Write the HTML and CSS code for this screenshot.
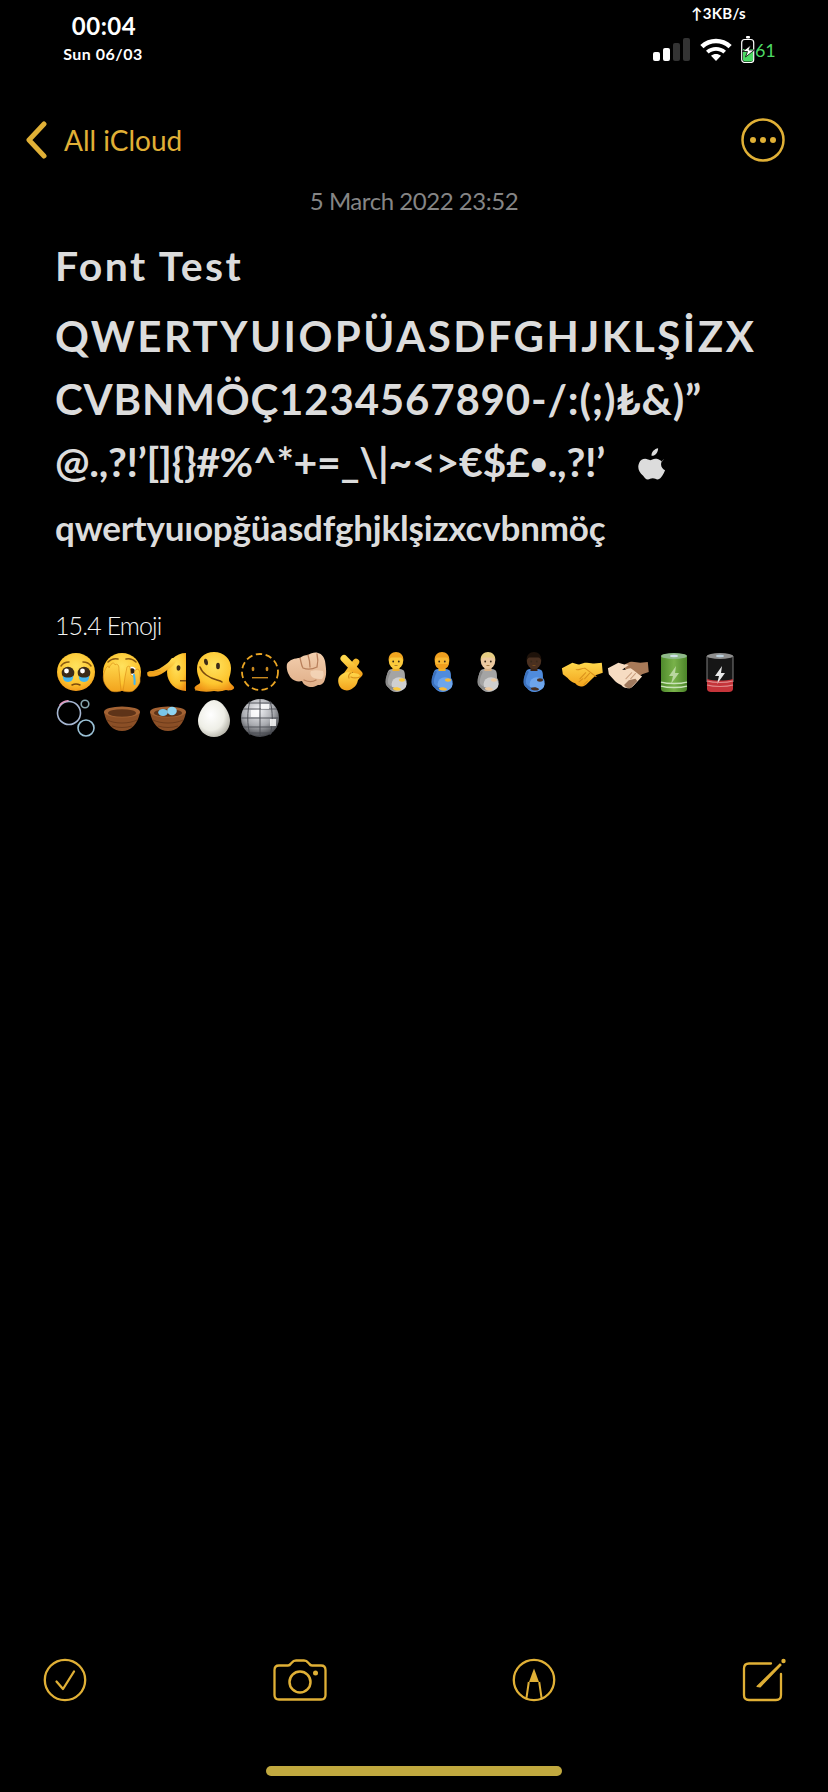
FILE: index.html
```html
<!DOCTYPE html>
<html lang="en">
<head>
<meta charset="utf-8">
<title>Font Test</title>
<link rel="stylesheet" href="styles.css">
</head>
<body>
<div class="screen">
  <header class="status">
    <div class="clock">
      <div class="time">00:04</div>
      <div class="day">Sun 06/03</div>
    </div>
    <div class="sys">
      <div class="speed">↑3KB/s</div>
      <div class="sys-row">
        <div class="signal"><i class="b1"></i><i class="b2"></i><i class="b3"></i><i class="b4"></i></div>
        <svg class="wifi" viewBox="0 0 32 24"><path fill="#fff" d="M16 24l-5-5.2c2.9-2.4 7.100-2.400 10 0zM8.700 16.500L6 13.700c5.700-5 14.300-5 20 0l-2.700 2.800c-4.200-3.600-10.400-3.600-14.600 0zM3.500 11.200L.3 8C9-.4 23-.4 31.700 8l-3.200 3.200C21.600 4.700 10.400 4.700 3.500 11.200z"/></svg>
        <svg class="batt" viewBox="0 0 14 27"><rect x="5" y="0" width="4" height="2.500" rx="1" fill="#fff"/><rect x=".7" y="3.500" width="12" height="23" rx="3" fill="none" stroke="#fff" stroke-width="1.200"/><path fill="#4cd964" d="M2 13h10v10.500a2 2 0 0 1-2 2H4a2 2 0 0 1-2-2z"/><path fill="#fff" stroke="#000" stroke-width=".8" d="M10 9L1.500 15.500h5L4.500 21l9-7h-5.500z"/></svg>
        <span class="pct">61</span>
      </div>
    </div>
  </header>

  <nav class="nav">
    <div class="back">
      <svg class="chev" viewBox="0 0 22 38"><path d="M19 3L4 19l15 16" fill="none" stroke="#e0b036" stroke-width="5" stroke-linecap="round" stroke-linejoin="round"/></svg>
      <span class="back-label">All iCloud</span>
    </div>
    <svg class="more" viewBox="0 0 44 44"><circle cx="22" cy="22" r="20.500" fill="none" stroke="#e0b036" stroke-width="2.500"/><circle cx="12" cy="22" r="3" fill="#e0b036"/><circle cx="22" cy="22" r="3" fill="#e0b036"/><circle cx="32" cy="22" r="3" fill="#e0b036"/></svg>
  </nav>

  <div class="stamp">5 March 2022 23:52</div>

  <main class="note">
    <h1 class="title">Font Test</h1>
    <div class="big l1">QWERTYUIOPÜASDFGHJKLŞİZX</div>
    <div class="big l2">CVBNMÖÇ1234567890-/:(;)₺&amp;)”</div>
    <div class="big l3">@.,?!’[]{}#%^*+=_\|~&lt;&gt;€$£<span class="dot">•</span>.,?!’<svg class="apple" viewBox="0 0 30 34"><path fill="#dcdcdc" d="M21.500 0c.2 2.200-.6 4.200-1.800 5.700-1.300 1.500-3.200 2.700-5.200 2.500-.2-2 .7-4.100 1.900-5.400C17.700 1.300 19.800.2 21.500 0zM28 11.600c-2 1.300-3.300 3.300-3.300 5.800 0 2.900 1.700 5.200 4.300 6.300-.7 2.100-1.700 4.100-3 5.900-1.300 1.800-2.700 3.900-4.900 3.900-2.100 0-2.800-1.300-5.300-1.300-2.400 0-3.200 1.300-5.200 1.300-2.200.1-3.800-2.200-5.100-4C.9 26-1 20.700 1.200 15.800c1.200-2.600 3.700-4.300 6.500-4.300 2.100 0 4 1.400 5.300 1.400 1.300 0 3.500-1.700 5.900-1.500 1.100 0 4.500.4 6.600 3.200z"/></svg></div>
    <div class="small">qwertyuıopğüasdfghjklşizxcvbnmöç</div>
    <div class="emoji-label">15.4 Emoji</div>

    <div class="emoji-grid">
      <svg class="emo" viewBox="0 0 46 46">
        <defs>
          <radialGradient id="face" cx=".5" cy=".35" r=".7"><stop offset="0" stop-color="#ffe25e"/><stop offset=".65" stop-color="#fdc52f"/><stop offset="1" stop-color="#ee8f14"/></radialGradient>
          <linearGradient id="hand" x1="0" y1="0" x2="0" y2="1"><stop offset="0" stop-color="#ffd84d"/><stop offset="1" stop-color="#f2a31c"/></linearGradient>
          <linearGradient id="skin" x1="0" y1="0" x2="0" y2="1"><stop offset="0" stop-color="#f3cfae"/><stop offset="1" stop-color="#dfae88"/></linearGradient>
          <linearGradient id="green" x1="0" y1="0" x2="1" y2="0"><stop offset="0" stop-color="#4f8a2c"/><stop offset=".5" stop-color="#79b24a"/><stop offset="1" stop-color="#4b8429"/></linearGradient>
          <radialGradient id="egg" cx=".4" cy=".4" r=".7"><stop offset="0" stop-color="#fff"/><stop offset=".6" stop-color="#eeeee6"/><stop offset="1" stop-color="#a9a79c"/></radialGradient>
          <radialGradient id="ball" cx=".45" cy=".3" r=".75"><stop offset="0" stop-color="#f4f5f8"/><stop offset=".55" stop-color="#a8aaaf"/><stop offset="1" stop-color="#2f3136"/></radialGradient>
          <symbol id="preg" viewBox="0 0 46 46">
            <path fill="var(--shirt)" d="M14 21c4-2 10-2 14 0 2 1 2 5 2 8 2 2 2 5 1 8-2 4-6 6-10 6-3 0-6-2-7-4-1-1-3-2-3-5 0-5 1-11 3-13z"/>
            <ellipse cx="24" cy="35" rx="7.500" ry="6.800" fill="var(--belly)"/>
            <path fill="none" stroke="var(--shirt2)" stroke-width="2.400" stroke-linecap="round" d="M14.500 23c-2 4-3.500 9-2.500 12 1 2 3.500 4 7 5"/>
            <path fill="var(--skin)" d="M18 39c2-1 6-1 8 1 0 2-6 2-8 0z"/>
            <ellipse cx="27" cy="31" rx="3" ry="1.700" fill="var(--skin)"/>
            <rect x="17.500" y="15" width="7" height="7" fill="var(--skin2)"/>
            <ellipse cx="21" cy="12" rx="7.200" ry="8" fill="var(--skin)"/>
            <path fill="var(--hair)" d="M13.700 12C13 6 17 3 21 3s8 3 7.300 9c-.6-2-1.600-3.500-2.800-3.500h-9c-1.200 0-2.200 1.500-2.800 3.500z"/>
            <circle cx="18.200" cy="12.500" r=".9" fill="#3a2a1a"/><circle cx="23.800" cy="12.500" r=".9" fill="#3a2a1a"/>
            <path d="M19.500 16.500h3" stroke="#8a5a20" stroke-width=".7"/>
          </symbol>
          <symbol id="brd" viewBox="0 0 46 46">
            <path fill="var(--hair)" d="M13.800 12c.5 2 1 3 2.200 3 2 0 8 0 10 0 1.200 0 1.700-1 2.200-3 0 5-2 8-7.200 8s-7.200-3-7.200-8z"/>
          </symbol>
        </defs>
        <circle cx="23" cy="23" r="19" fill="url(#face)"/>
        <path d="M8 17c2-3 5-4 8-4M38 17c-2-3-5-4-8-4" fill="none" stroke="#8a5a10" stroke-width="1.500" stroke-linecap="round"/>
        <circle cx="15" cy="24" r="6.300" fill="#3b2a18"/><circle cx="31" cy="24" r="6.300" fill="#3b2a18"/>
        <circle cx="13.500" cy="22" r="2.400" fill="#fff"/><circle cx="29.500" cy="22" r="2.400" fill="#fff"/>
        <path d="M10 27c2 2 8 2 10 0 .5 3-1.500 6-5 6s-5.500-3-5-6zM26 27c2 2 8 2 10 0 .5 3-1.500 6-5 6s-5.500-3-5-6z" fill="#45b6ee"/>
        <path d="M19 36c3-1.500 5-1.500 8 0" fill="none" stroke="#7a4a0e" stroke-width="1.500" stroke-linecap="round"/>
      </svg>

      <svg class="emo" viewBox="0 0 46 46">
        <circle cx="23" cy="23" r="19" fill="url(#face)"/>
        <path d="M9 13c3-3 6-4 10-3M37 13c-3-3-6-4-10-3" fill="none" stroke="#8a5a10" stroke-width="1.500" stroke-linecap="round"/>
        <circle cx="33" cy="22" r="4.200" fill="#fff"/><circle cx="33" cy="22" r="2.700" fill="#2b1e10"/>
        <path fill="url(#hand)" stroke="#d88a14" stroke-width=".6" d="M5 24c1-3 2-6 4-7 1 0 1 1 1 2 1-3 3-5 4-5s2 1 2 2c1-1 2-1 3 0 1 1 1 3 1 5l1 10 1 11c-3 1-8 1-10 0-3-2-6-6-7-9-1-3-1-6 0-9z"/>
        <path fill="url(#hand)" stroke="#d88a14" stroke-width=".6" d="M41 26c0-3-1-5-2-6l-3 1-1 5c-1 2-2 1-3 0l-1-8c-1-1-2-1-3 0l-2 10-2 14c3 1 8 1 10 0 3-2 6-6 7-9 0-2 0-5 0-7z"/>
        <path d="M35 26c.5 3 1 6 .5 9" fill="none" stroke="#45b6ee" stroke-width="2" stroke-linecap="round"/>
      </svg>

      <svg class="emo" viewBox="0 0 46 46">
        <path fill="url(#face)" d="M41 4a19 19 0 0 0 0 38z"/>
        <ellipse cx="33.500" cy="19" rx="1.900" ry="2.800" fill="#3b2a18"/>
        <rect x="35" y="31" width="6" height="1.500" fill="#7a4a0e"/>
        <path d="M5 25c5 0 10-2 14-5 3-2 7-5 9-8" fill="none" stroke="url(#hand)" stroke-width="5.500" stroke-linecap="round"/>
        <path d="M3 24c4-2 8-1 12-2" fill="none" stroke="#e9a11f" stroke-width="1.500" stroke-linecap="round"/>
      </svg>

      <svg class="emo" viewBox="0 0 46 46">
        <path fill="url(#face)" d="M23 3c10 0 17 7 17 16 0 6-2 9-2 12 0 3 4 5 5 7 1 3-5 4-8 3-4 1-7 2-12 1-6 1-13 1-18-1-3-2-1-4 3-6 2-1 1-3 0-6-1-3-2-5-2-9C6 10 13 3 23 3z"/>
        <ellipse cx="27" cy="17" rx="1.900" ry="3.300" fill="#3b2a18"/><ellipse cx="15" cy="13" rx="1.900" ry="3.300" transform="rotate(-10 15 13)" fill="#3b2a18"/>
        <path d="M9 18c2 6 9 11 17 13 2 .5 4 1 5 2" fill="none" stroke="#7a4a0e" stroke-width="1.500" stroke-linecap="round"/>
        <path d="M4 41c6-1 10 1 14 0 6-1 9 0 14 0" fill="none" stroke="#e59a18" stroke-width="1.200"/>
      </svg>

      <svg class="emo" viewBox="0 0 46 46">
        <circle cx="23" cy="23" r="18" fill="none" stroke="#eba624" stroke-width="1.800" stroke-dasharray="6.500 3.500"/>
        <ellipse cx="16" cy="20" rx="1.400" ry="2.300" fill="#c98a20"/><ellipse cx="30" cy="20" rx="1.400" ry="2.300" fill="#c98a20"/>
        <rect x="15" y="28" width="16" height="1.400" fill="#c98a20"/>
      </svg>

      <svg class="emo" viewBox="0 0 46 46">
        <path fill="url(#skin)" d="M4 15c2-4 8-6 13-6 2-2 5-3 8-3 3-2 7-3 10-2 4 1 6 4 7 8 1 6 2 13 0 18-1 4-3 6-7 6-3 2-8 3-11 1-3-1-4-3-5-5-4 1-8 0-11-3-3-4-5-9-4-14z"/>
        <path d="M17 9c1 3 1 7 3 10M25 6c1 3 2 8 2 12M34 5c1 4 1 9 0 13M20 19c5 2 10 1 14-1M21 31c4 2 9 2 12 0" fill="none" stroke="#b9805c" stroke-width="1.300" stroke-linecap="round"/>
        <path fill="#f5d8bc" d="M28 22c3-1 8-1 12 0 1 3 1 6-1 8-3 0-7 0-10-2-2-2-2-5-1-6z" opacity=".8"/>
      </svg>

      <svg class="emo" viewBox="0 0 46 46">
        <path d="M27 13L17 27" fill="none" stroke="#f7bb2f" stroke-width="6.500" stroke-linecap="round"/>
        <path d="M15 9.500L30 25" fill="none" stroke="url(#hand)" stroke-width="7" stroke-linecap="round"/>
        <path fill="url(#hand)" d="M10 28c3-4 8-6 12-4 4 0 8 0 9 3 0 2-1 3-2 4-1 4-2 6-5 8-3 3-8 3-11 1-3-2-5-8-3-12z"/>
        <path d="M22 24c-2 1-3 3-2 5M31 28c-3 1-7 1-9 0" fill="none" stroke="#d9901b" stroke-width="1.200" stroke-linecap="round"/>
      </svg>

      <svg class="emo p1" viewBox="0 0 46 46"><use href="#preg"/></svg>
      <svg class="emo p2" viewBox="0 0 46 46"><use href="#preg"/><use href="#brd"/></svg>
      <svg class="emo p3" viewBox="0 0 46 46"><use href="#preg"/></svg>
      <svg class="emo p4" viewBox="0 0 46 46"><use href="#preg"/></svg>

      <svg class="emo" viewBox="0 0 46 46">
        <g transform="translate(1 7) scale(.95 .76)">
          <path fill="url(#hand)" d="M2 16l11-7c3 1 6 3 8 2l5-2c4-1 8 1 10 1l8-1 1 13-7 3-9 11c-2 3-5 5-7 4-3 0-5-2-6-4-3-1-6-4-8-7L3 24z"/>
          <path d="M17 18c3 1 6-2 9-2 4 3 8 8 12 11M31 23l-5 7M27 22l-6 8M20 34l4-4M25 38l4-5" fill="none" stroke="#d9901b" stroke-width="1.200" stroke-linecap="round"/>
        </g>
      </svg>

      <svg class="emo" viewBox="0 0 46 46">
        <g transform="translate(1 7) scale(.95 .76)">
          <path fill="#a87a58" d="M20 11l5-3c4-1 8 1 11 1l8-1 1 13-7 3-6 6-12-13z"/>
          <path fill="#f6dcc2" d="M2 16l11-7c3 1 6 3 8 2l3 1-7 6c3 1 6-2 9-2 4 3 8 8 12 11l-9 12c-2 3-5 4-7 3-3 0-5-2-6-4-3-1-6-4-8-7L3 24z"/>
          <path fill="#8a6045" d="M19 38l5-6 7-2 2 3-7 9c-2 1-5 0-7-4z" opacity=".8"/>
          <path d="M31 23l-5 7M27 22l-6 8" fill="none" stroke="#c99f80" stroke-width="1.200" stroke-linecap="round"/>
        </g>
      </svg>

      <svg class="emo" viewBox="0 0 46 46">
        <path fill="url(#green)" d="M10 8c0-2 2-3 4-3h18c2 0 4 1 4 3v32c0 2-2 3-4 3H14c-2 0-4-1-4-3z"/>
        <ellipse cx="23" cy="7" rx="13" ry="3" fill="#8fb98a"/>
        <ellipse cx="23" cy="7" rx="4" ry="1.200" fill="#cfe0e8"/>
        <path d="M25 17l-7 10h4l-2 8 8-11h-4z" fill="#b9d79f"/>
        <path d="M10 33c7 2 19 2 26 0M10 37c7 2 19 2 26 0" fill="none" stroke="#c9e2b8" stroke-width="1.300"/>
      </svg>

      <svg class="emo" viewBox="0 0 46 46">
        <path fill="#161616" stroke="#7c7c7c" stroke-width="1" d="M10 7h26v26H10z"/>
        <path fill="#c5343a" d="M10 30c7 2 19 2 26 0v10c0 2-2 3-4 3H14c-2 0-4-1-4-3z"/>
        <ellipse cx="23" cy="7" rx="13" ry="3" fill="#8e8e8e"/>
        <ellipse cx="23" cy="7" rx="4" ry="1.200" fill="#bcd0dc"/>
        <path d="M25 17l-7 10h4l-2 8 8-11h-4z" fill="#e8e8e8"/>
        <path d="M10 32c7 2 19 2 26 0M10 36c7 2 19 2 26 0" fill="none" stroke="#e08b8b" stroke-width="1.200"/>
      </svg>

      <svg class="emo" viewBox="0 0 46 46">
        <g fill="#000" stroke-width="1.600"><circle cx="16" cy="18" r="11.500" stroke="#a6b7d2"/><circle cx="33" cy="33" r="8" stroke="#9cc3d8"/><circle cx="32" cy="9" r="3.800" stroke="#88a8b0"/></g>
        <path d="M7 10c2-3 5-4 8-4.300" fill="none" stroke="#e39ac0" stroke-width="1.600" stroke-linecap="round"/>
      </svg>

      <svg class="emo" viewBox="0 0 46 46">
        <path fill="#8b4f26" d="M5 17c2 12 9 19 18 19s16-7 18-19z"/>
        <ellipse cx="23" cy="17" rx="18" ry="5.500" fill="#a36233"/>
        <ellipse cx="23" cy="18" rx="14" ry="3.800" fill="#5e3318"/>
        <path d="M8 25c8 4 22 4 30 0M13 31c6 2 14 2 20 0" fill="none" stroke="#6e3c1b" stroke-width="1"/>
      </svg>

      <svg class="emo" viewBox="0 0 46 46">
        <path fill="#8b4f26" d="M5 17c2 12 9 19 18 19s16-7 18-19z"/>
        <ellipse cx="23" cy="17" rx="18" ry="5.500" fill="#a36233"/>
        <ellipse cx="23" cy="18" rx="14" ry="3.800" fill="#5e3318"/>
        <ellipse cx="18" cy="17.500" rx="4.800" ry="3.400" fill="#79c6e8"/><ellipse cx="27" cy="16" rx="4.800" ry="4.200" fill="#8ed4f0"/>
        <path d="M8 25c8 4 22 4 30 0M13 31c6 2 14 2 20 0" fill="none" stroke="#6e3c1b" stroke-width="1"/>
      </svg>

      <svg class="emo" viewBox="0 0 46 46">
        <path fill="url(#egg)" d="M23 5c8 0 16 12 16 21 0 9-7 16-16 16S7 35 7 26C7 17 15 5 23 5z"/>
      </svg>

      <svg class="emo" viewBox="0 0 46 46">
        <circle cx="23" cy="23" r="19" fill="url(#ball)"/>
        <path d="M4 23h38M6 14h34M6 32h34M11 8h24M11 38h24M23 4v38M13 6c-3 10-3 24 0 34M33 6c3 10 3 24 0 34" fill="none" stroke="#4a4c52" stroke-width=".9"/>
        <path fill="#fff" d="M24 9h8v5h-8zM14 15h8v7h-8zM33 24h6v7h-6z" opacity=".8"/>
      </svg>
    </div>
  </main>

  <footer class="toolbar">
    <svg class="tool" viewBox="0 0 44 44"><circle cx="22" cy="22" r="20.200" fill="none" stroke="#e0b036" stroke-width="2.300"/><path d="M13.500 23.500l6.500 7.500L31 13.500" fill="none" stroke="#e0b036" stroke-width="2.300" stroke-linecap="round" stroke-linejoin="round"/></svg>
    <svg class="tool cam" viewBox="0 0 54 42"><path d="M6 6.500h9c1.500 0 2-.5 3-2l1-1c1-1.500 2-2 4-2h8c2 0 3 .5 4 2l1 1c1 1.500 1.500 2 3 2h9c3 0 4.500 1.500 4.500 4.500v25c0 3-1.500 4.500-4.500 4.500H6c-3 0-4.500-1.500-4.500-4.500V11c0-3 1.500-4.500 4.500-4.500z" fill="none" stroke="#e0b036" stroke-width="2.300"/><circle cx="27" cy="23" r="10.500" fill="none" stroke="#e0b036" stroke-width="2.500"/><circle cx="42.500" cy="14" r="2.500" fill="#e0b036"/></svg>
    <svg class="tool" viewBox="0 0 44 44"><circle cx="22" cy="22" r="20.200" fill="none" stroke="#e0b036" stroke-width="2.300"/><path fill="#e0b036" d="M22 10.500l5 13.500H17z"/><path d="M16.800 24l-2.500 17M27.200 24l2.500 17" fill="none" stroke="#e0b036" stroke-width="2"/></svg>
    <svg class="tool" viewBox="0 0 44 44"><path d="M29 5.500H7c-3 0-5 2-5 5V37c0 3 2 5 5 5h27c3 0 5-2 5-5V16" fill="none" stroke="#e0b036" stroke-width="2.300" stroke-linecap="round"/><path d="M15 28.500l23-22.500 1 1-21 22z" fill="#e0b036" stroke="#e0b036" stroke-width="1.200" stroke-linejoin="round"/><circle cx="41.500" cy="3" r="2.200" fill="#e0b036"/></svg>
  </footer>
  <div class="home-wrap"><div class="home"></div></div>
</div>
</body>
</html>
```
FILE: styles.css
```css
* { box-sizing: border-box; }
html, body { margin: 0; padding: 0; background: #000; }
body { font-family: "Lato", "Noto Sans", "DejaVu Sans", sans-serif; }

.screen {
  width: 828px;
  height: 1792px;
  background: #000;
  display: flex;
  flex-direction: column;
  overflow: hidden;
}

/* Status bar */
.status {
  height: 100px;
  display: flex;
  justify-content: space-between;
  padding: 0 56px 0 0;
  color: #fff;
}
.clock { width: 206px; text-align: center; padding-top: 11px; }
.time { font-size: 24px; line-height: 30px; font-weight: 700; letter-spacing: .5px; padding-left: 2px; }
.day { font-size: 16px; line-height: 20px; font-weight: 700; margin-top: 3px; letter-spacing: .5px; }

.sys { display: flex; flex-direction: column; align-items: flex-end; width: 120px; }
.speed { font-size: 15px; line-height: 18px; font-weight: 700; margin-top: 4px; margin-right: 26px; letter-spacing: .3px; }
.sys-row { display: flex; align-items: flex-end; margin-top: 14px; height: 27px; }
.signal { display: flex; align-items: flex-end; gap: 3px; height: 24px; margin-bottom: 2px; }
.signal i { display: block; width: 7px; border-radius: 2px; background: #fff; }
.signal .b1 { height: 9px; }
.signal .b2 { height: 13px; }
.signal .b3 { height: 18px; background: #333; }
.signal .b4 { height: 23px; background: #333; }
.wifi { width: 32px; height: 24px; margin: 0 9px 2px 10px; display: block; }
.batt { width: 14px; height: 27px; display: block; }
.pct { color: #4cd964; font-size: 18px; line-height: 22px; margin: 0 0 2px 0; width: 17px; letter-spacing: -.3px; }

/* Navigation */
.nav {
  height: 80px;
  display: flex;
  align-items: center;
  justify-content: space-between;
  padding: 0 43px 0 25px;
}
.back { display: flex; align-items: center; }
.chev { width: 22px; height: 38px; display: block; }
.back-label { color: #e0b036; font-size: 28px; margin-left: 17px; letter-spacing: 0; }
.more { width: 44px; height: 44px; display: block; }

.stamp {
  height: 42px;
  line-height: 42px;
  text-align: center;
  color: #858585;
  font-size: 24px;
  letter-spacing: -.45px;
}

/* Note body */
.note { flex: 1; padding: 0 0 0 55px; color: #dcdcdc; }
.title {
  margin: 12px 0 0;
  font-size: 41px;
  line-height: 63px;
  font-weight: 700;
  letter-spacing: 2.4px;
}
.big {
  font-size: 42px;
  line-height: 63px;
  font-weight: 700;
  white-space: nowrap;
}
.l1 { margin-top: 8px; letter-spacing: 2.45px; }
.l2 { letter-spacing: .82px; }
.l3 { font-size: 41px; letter-spacing: -.3px; margin: -1px 0 2px; }
.dot { font-size: 32px; vertical-align: 2px; }
.apple { display: inline-block; width: 28px; height: 32px; margin-left: 33px; vertical-align: -3px; }
.small {
  font-size: 35px;
  line-height: 63px;
  font-weight: 700;
  white-space: nowrap;
  letter-spacing: -.2px;
}
.emoji-label {
  margin-top: 46px;
  font-size: 25px;
  line-height: 40px;
  color: #f4f4f4;
  font-weight: 300;
  letter-spacing: -.9px;
}
.emoji-grid {
  display: grid;
  grid-template-columns: repeat(15, 46px);
  grid-auto-rows: 46px;
  margin: 4px 0 0 -2px;
}
.emo { width: 46px; height: 46px; display: block; }
.p1 { --skin: #fbc93c; --skin2: #eeb02b; --hair: #f2a61f; --shirt: #a4a4a4; --shirt2: #8b8b8b; --belly: #cfcfcf; }
.p2 { --skin: #f9b934; --skin2: #eeb02b; --hair: #ef9f1f; --shirt: #4f8bdc; --shirt2: #3b70bc; --belly: #6da5ec; }
.p3 { --skin: #ecc9a0; --skin2: #d9b184; --hair: #e6cd82; --shirt: #a4a4a4; --shirt2: #8b8b8b; --belly: #cfcfcf; }
.p4 { --skin: #4a3020; --skin2: #3a2416; --hair: #1e120a; --shirt: #4f8bdc; --shirt2: #3b70bc; --belly: #6da5ec; }

/* Toolbar */
.toolbar {
  height: 46px;
  display: flex;
  align-items: center;
  justify-content: space-between;
  padding: 0 42px 0 43px;
}
.tool { width: 44px; height: 44px; display: block; }
.tool.cam { width: 54px; height: 42px; }
.home-wrap { height: 89px; display: flex; justify-content: center; padding-top: 63px; }
.home { width: 296px; height: 10px; border-radius: 5px; background: #c1a93f; }
```
